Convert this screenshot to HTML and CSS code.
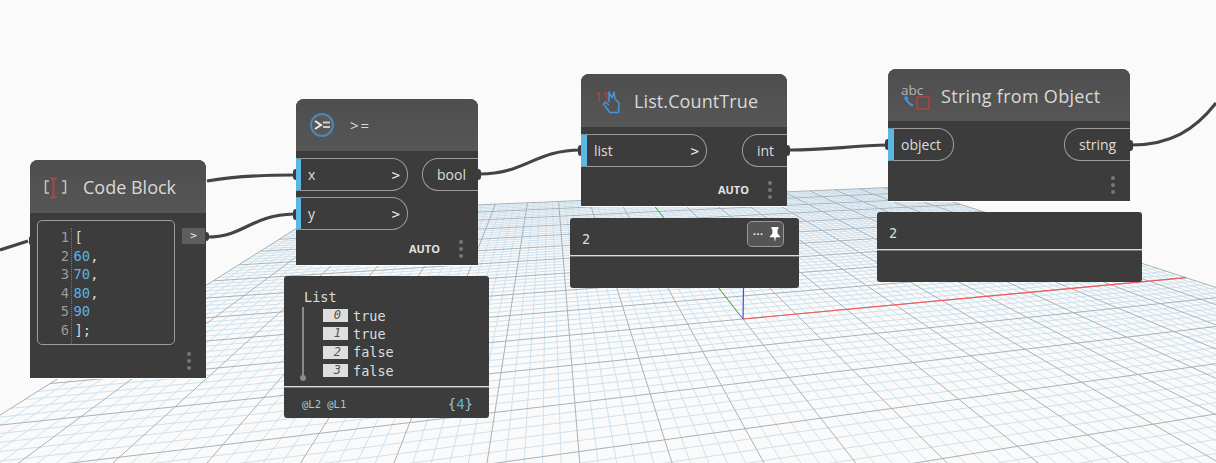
FILE: index.html

```html
<!DOCTYPE html>
<html lang="en">
<head>
  <meta charset="UTF-8">
  <title>Dynamo graph</title>
  <link rel="stylesheet" href="styles.css">
</head>
<body>
  <div class="canvas">
    <svg class="layer" id="grid" width="1216" height="463"></svg>

    <svg class="layer" width="1216" height="463">
      <g class="wire">
        <path d="M0 250 L28 241"/>
        <path d="M207 181 C235 176 265 175 294 175"/>
        <path d="M207 237 C245 237 250 215 294 214"/>
        <path d="M480 174 C525 174 535 150 581 150"/>
        <path d="M790 150 C825 150 850 146 888 145"/>
        <path d="M1132 145 C1170 145 1195 130 1216 103"/>
      </g>
    </svg>

    <div class="node node-code">
      <div class="node-head head-code">
        <svg class="icon" width="30" height="24" viewBox="0 0 30 24">
          <path class="ic-gray" d="M6 6H2.5V18H6M19 6H22.5V18H19"/>
          <path class="ic-red" d="M7.5 3.5H13.5M10.5 3.5V22.5M7.5 22.5H13.5"/>
        </svg>
        <span class="node-title">Code Block</span>
      </div>
      <div class="code-wrap">
        <div class="code-box">
          <div class="code-nums"><div>1</div><div>2</div><div>3</div><div>4</div><div>5</div><div>6</div></div>
          <div class="code-text">
            <div class="ch-br">[</div>
            <div><span class="num">60</span>,</div>
            <div><span class="num">70</span>,</div>
            <div><span class="num">80</span>,</div>
            <div><span class="num">90</span></div>
            <div class="ch-br">];</div>
          </div>
        </div>
        <div class="out-tab">&gt;</div>
      </div>
      <div class="dots dots-code"><i></i><i></i><i></i></div>
    </div>

    <div class="node node-gte">
      <div class="node-head">
        <svg class="icon" width="26" height="26" viewBox="0 0 26 26">
          <circle cx="13" cy="13" r="11" class="ic-circle"/>
          <path class="ic-white" d="M6 9L12 13L6 17"/>
          <path class="ic-light" d="M14 10.5H21M14 15H21"/>
        </svg>
        <span class="node-title title-op">&gt;=</span>
      </div>
      <div class="ports ports-gte">
        <div class="port in w-gte"><span>x</span><b>&gt;</b></div>
        <div class="port out w-bool">bool</div>
        <div class="port in w-gte"><span>y</span><b>&gt;</b></div>
      </div>
      <div class="node-foot">
        <span class="auto">AUTO</span>
        <div class="dots"><i></i><i></i><i></i></div>
      </div>
    </div>

    <div class="node node-count">
      <div class="node-head">
        <svg class="icon" width="28" height="36" viewBox="0 -4 28 36">
          <text x="0" y="15" class="ic-nums">11</text>
          <path class="ic-blue" d="M15 15L15 5L18 11L20 5L21 12L25 16L24.5 25.5H16L9.5 17L11.5 15L15 18"/>
        </svg>
        <span class="node-title">List.CountTrue</span>
      </div>
      <div class="ports">
        <div class="port in w-list"><span>list</span><b>&gt;</b></div>
        <div class="port out w-int">int</div>
      </div>
      <div class="node-foot">
        <span class="auto">AUTO</span>
        <div class="dots"><i></i><i></i><i></i></div>
      </div>
    </div>

    <div class="node node-string">
      <div class="node-head">
        <svg class="icon" width="32" height="38" viewBox="0 -4 32 38">
          <text x="0" y="15" class="ic-abc">abc</text>
          <path class="ic-arrow" d="M5 18C5.5 21 8 24 12 25.5"/>
          <path class="ic-arrowhead" d="M2.5 19.5L5 15L8 19.5Z"/>
          <rect x="16" y="17" width="12" height="12" class="ic-square"/>
        </svg>
        <span class="node-title">String from Object</span>
      </div>
      <div class="ports">
        <div class="port in w-object"><span>object</span></div>
        <div class="port out w-string">string</div>
      </div>
      <div class="node-foot">
        <div class="dots"><i></i><i></i><i></i></div>
      </div>
    </div>

    <!-- wire ends sitting on the node edges -->
    <i class="cap cap-x"></i><i class="cap cap-y"></i><i class="cap cap-list"></i><i class="cap cap-object"></i>
    <i class="cap cap-code"></i><i class="cap cap-code2"></i><i class="cap cap-bool"></i><i class="cap cap-int"></i><i class="cap cap-string"></i>

    <div class="bubble bubble-list">
      <div class="bubble-main list-main">
        <div class="list-title">List</div>
        <div class="list-rows">
          <div class="list-row"><em>0</em>true</div>
          <div class="list-row"><em>1</em>true</div>
          <div class="list-row"><em>2</em>false</div>
          <div class="list-row"><em>3</em>false</div>
        </div>
      </div>
      <div class="bubble-foot">
        <span class="levels">@L2 @L1</span>
        <span class="count">{<b>4</b>}</span>
      </div>
    </div>

    <div class="bubble bubble-count">
      <div class="bubble-main value-main">2
        <div class="pin-btn">
          <span>&middot;&middot;&middot;</span>
          <svg width="12" height="15" viewBox="0 0 14 16" preserveAspectRatio="none">
            <path d="M3 0H11V2L10 3V7L13 10V11H8L7 16L6 11H1V10L4 7V3L3 2Z" fill="#fff"/>
          </svg>
        </div>
      </div>
      <div class="bubble-foot"></div>
    </div>

    <div class="bubble bubble-string">
      <div class="bubble-main value-main">2</div>
      <div class="bubble-foot"></div>
    </div>
  </div>
  <script src="grid.js"></script>
</body>
</html>
```

FILE: styles.css

```css
body {
  margin: 0;
  background: #fafafa;
  font-family: "Open Sans", sans-serif;
}
.canvas {
  position: relative;
  width: 1216px;
  height: 463px;
  overflow: hidden;
  background: #fafafa;
}
.layer {
  position: absolute;
  left: 0;
  top: 0;
}
.wire path {
  fill: none;
  stroke: #444;
  stroke-width: 3.2;
}

/* nodes */
.node {
  position: absolute;
  display: flex;
  flex-direction: column;
  background: #3c3c3c;
  border-radius: 8px 8px 0 0;
  box-shadow: 0 1px 0 #fff;
  color: #ddd;
}
.node-code { left: 30px; top: 160px; width: 176px; height: 218px; }
.node-gte { left: 296px; top: 99px; width: 182px; height: 166px; }
.node-count { left: 581px; top: 74px; width: 206px; height: 132px; }
.node-string { left: 888px; top: 69px; width: 242px; height: 132px; }

.node-head {
  display: flex;
  align-items: center;
  flex: none;
  height: 52px;
  padding-left: 13px;
  background: linear-gradient(#4e4e4e, #565656);
  border-radius: 8px 8px 0 0;
}
.node-head .icon { flex: none; }
.node-title {
  font-size: 18px;
  color: #d9d9d9;
  white-space: nowrap;
}
.head-code .node-title { margin-left: 10px; }
.node-gte .node-title { margin-left: 15px; }
.title-op { font-size: 15px; letter-spacing: 2px; }
.node-count .node-title { margin-left: 12px; letter-spacing: 0.1px; }
.node-string .node-title { margin: 2px 0 0 8px; letter-spacing: 0.3px; }
.node-code .node-head { height: 53px; }
.node-count .node-head { height: 53px; }

/* ports */
.ports {
  display: grid;
  grid-template-columns: 1fr auto;
  row-gap: 6px;
  align-items: start;
  padding-top: 7px;
}
.port {
  box-sizing: border-box;
  display: flex;
  align-items: center;
  justify-content: space-between;
  height: 33px;
  border: 1px solid #9c9c9c;
  font-size: 14px;
  color: #dcdcdc;
}
.port b {
  font-family: "DejaVu Sans Mono", monospace;
  font-weight: normal;
  font-size: 14px;
  color: #eee;
}
.port.in {
  padding: 0 7px 0 7px;
  border-left: 6px solid #5bb8e4;
  border-radius: 0 16px 16px 0;
}
.port.out {
  justify-content: flex-start;
  border-right: 0;
  border-radius: 16px 0 0 16px;
  padding-left: 14px;
}
.ports-gte .port.in { border-left-width: 5px; }
.w-gte { width: 112px; }
.w-bool { width: 56px; }
.w-list { width: 126px; }
.w-int { width: 45px; }
.w-object { width: 66px; }
.w-string { width: 66px; }

.node-foot {
  display: flex;
  align-items: center;
  justify-content: flex-end;
  margin-top: auto;
  height: 33px;
  padding-right: 15px;
}
.auto {
  margin-right: 19px;
  font-size: 11px;
  font-weight: 700;
  color: #e4e4e4;
}
.dots {
  display: flex;
  flex-direction: column;
  gap: 3px;
}
.dots i {
  display: block;
  width: 4px;
  height: 4px;
  border-radius: 50%;
  background: #777;
}
.dots-code {
  align-self: flex-end;
  margin: auto 15px 8px 0;
}

/* code block */
.code-wrap {
  display: flex;
  align-items: flex-start;
  padding: 7px 1px 0 7px;
  gap: 7px;
}
.code-box {
  box-sizing: border-box;
  display: flex;
  width: 138px;
  height: 125px;
  padding-top: 7px;
  border: 1px solid #9c9c9c;
  border-radius: 5px;
  font-family: "DejaVu Sans Mono", monospace;
  font-size: 13.8px;
  line-height: 18.6px;
}
.code-nums {
  width: 31px;
  padding-right: 2px;
  text-align: right;
  color: #999;
  border-right: 1px dotted #777;
}
.code-text {
  padding-left: 1.5px;
  color: #ddd;
}
.ch-br { padding-left: 1px; }
.num { color: #58b3e6; }
.out-tab {
  width: 23px;
  height: 16px;
  margin-top: 8px;
  background: #5e5e5e;
  color: #eee;
  font-family: "DejaVu Sans Mono", monospace;
  font-size: 11px;
  line-height: 15px;
  text-align: center;
}

/* icon strokes */
.ic-gray { fill: none; stroke: #c4c4c4; stroke-width: 1.5; }
.ic-red { fill: none; stroke: #b04545; stroke-width: 2; }
.ic-circle { fill: #585858; stroke: #4c87b8; stroke-width: 2; }
.ic-white { fill: none; stroke: #eee; stroke-width: 2; }
.ic-light { fill: none; stroke: #ccc; stroke-width: 2; }
.ic-blue { fill: none; stroke: #4a90d4; stroke-width: 1.6; stroke-linejoin: round; }
.ic-nums { fill: #a04c4c; font-size: 15px; letter-spacing: -1px; font-family: "Open Sans", sans-serif; }
.ic-abc { fill: #b4b4b4; font-size: 13.5px; font-family: "Open Sans", sans-serif; }
.ic-arrow { fill: none; stroke: #4a90d4; stroke-width: 2; }
.ic-arrowhead { fill: #4a90d4; }
.ic-square { fill: none; stroke: #b04040; stroke-width: 1.6; }

/* wire caps */
.cap {
  position: absolute;
  width: 3px;
  height: 11px;
  background: #3c3c3c;
}
.cap-x { left: 293px; top: 169px; border-radius: 3px 0 0 3px; }
.cap-y { left: 293px; top: 209px; border-radius: 3px 0 0 3px; }
.cap-list { left: 578px; top: 145px; border-radius: 3px 0 0 3px; }
.cap-object { left: 885px; top: 139px; border-radius: 3px 0 0 3px; }
.cap-code { left: 206px; top: 232px; height: 9px; border-radius: 0 3px 3px 0; }
.cap-code2 { left: 29px; top: 236px; width: 2px; height: 9px; border-radius: 3px 0 0 3px; }
.cap-bool { left: 478px; top: 169px; border-radius: 0 3px 3px 0; }
.cap-int { left: 787px; top: 145px; border-radius: 0 3px 3px 0; }
.cap-string { left: 1130px; top: 140px; border-radius: 0 3px 3px 0; }

/* preview bubbles */
.bubble {
  position: absolute;
  display: flex;
  flex-direction: column;
  background: #3c3c3c;
  border-radius: 3px;
  color: #ddd;
  font-family: "DejaVu Sans Mono", monospace;
}
.bubble-list { left: 284px; top: 276px; width: 205px; height: 142px; }
.bubble-count { left: 570px; top: 218px; width: 229px; height: 70px; }
.bubble-string { left: 877px; top: 212px; width: 265px; height: 70px; }

.bubble-main {
  position: relative;
  box-sizing: border-box;
  flex: none;
  border-bottom: 1px solid #ddd;
  box-shadow: 0 1px 0 #777;
}
.value-main {
  height: 38px;
  padding: 12px 0 0 12px;
  font-size: 13.5px;
  line-height: 18px;
}
.list-main {
  height: 111px;
  padding: 13px 0 0 20px;
  font-size: 13.5px;
}
.list-title { line-height: 16px; }
.list-rows {
  position: relative;
  margin-top: 1.5px;
  padding-left: 19px;
}
.list-rows::before {
  content: "";
  position: absolute;
  left: -2px;
  top: 0;
  width: 2px;
  height: 70px;
  background: #8a8a8a;
}
.list-rows::after {
  content: "";
  position: absolute;
  left: -4px;
  top: 68px;
  width: 6px;
  height: 6px;
  border-radius: 50%;
  background: #8a8a8a;
}
.list-row {
  display: flex;
  align-items: center;
  height: 18.3px;
  line-height: 18px;
}
.list-row em {
  box-sizing: border-box;
  width: 25px;
  height: 13px;
  margin-right: 5px;
  padding-right: 7px;
  background: #dedede;
  color: #555;
  font-size: 12px;
  line-height: 13px;
  text-align: right;
}
.bubble-foot {
  display: flex;
  align-items: center;
  justify-content: space-between;
  flex: 1;
  padding: 3px 16px 0 18px;
}
.levels { font-size: 10.5px; color: #a9c7d6; }
.count { font-size: 14px; color: #9fc0d0; }
.count b { font-weight: normal; color: #5bb0de; }

.pin-btn {
  position: absolute;
  right: 15px;
  top: 3px;
  box-sizing: border-box;
  display: flex;
  align-items: center;
  justify-content: center;
  gap: 7px;
  width: 37px;
  height: 26px;
  padding-left: 2px;
  border: 1px solid #999;
  border-radius: 5px;
  background: #555;
  color: #fff;
  font-size: 9px;
  font-weight: 700;
  letter-spacing: -2px;
}
```

FILE: grid.js

```js
// ground grid, drawn in perspective from two vanishing points
const svg = document.getElementById("grid");
const NS = "http://www.w3.org/2000/svg";

const origin = [743, 319];
const vanishX = [3200, 90];
const vanishY = [548, 70];
const A = 0.022;
const B = 0.095;
const SIZE = 10;
const NEAR = -8;
const DIV = 5;

function project(u, v) {
  const w = 1 + u * A + v * B;
  return [
    (origin[0] + u * A * vanishX[0] + v * B * vanishY[0]) / w,
    (origin[1] + u * A * vanishX[1] + v * B * vanishY[1]) / w
  ];
}

function line(p, q, color, width) {
  const el = document.createElementNS(NS, "line");
  el.setAttribute("x1", p[0].toFixed(2));
  el.setAttribute("y1", p[1].toFixed(2));
  el.setAttribute("x2", q[0].toFixed(2));
  el.setAttribute("y2", q[1].toFixed(2));
  el.setAttribute("stroke", color);
  el.setAttribute("stroke-width", width);
  svg.appendChild(el);
}

function drawLines(major) {
  for (let i = -SIZE * DIV; i <= SIZE * DIV; i++) {
    if ((i % DIV === 0) !== major) continue;
    const t = i / DIV;
    const color = major ? "#a9b2b7" : "#cfe1ed";
    line(project(t, NEAR), project(t, SIZE), color, 1);
  }
  for (let i = NEAR * DIV; i <= SIZE * DIV; i++) {
    if ((i % DIV === 0) !== major) continue;
    const t = i / DIV;
    const color = major ? "#a9b2b7" : "#cfe1ed";
    line(project(-SIZE, t), project(SIZE, t), color, 1);
  }
}

drawLines(false);
drawLines(true);

// axes
line(origin, project(SIZE, 0), "#f2575c", 1.2);
line(origin, project(0, 10), "#4fa34f", 1);
line(origin, [744, 260], "#4a4ae8", 1.2);
```
